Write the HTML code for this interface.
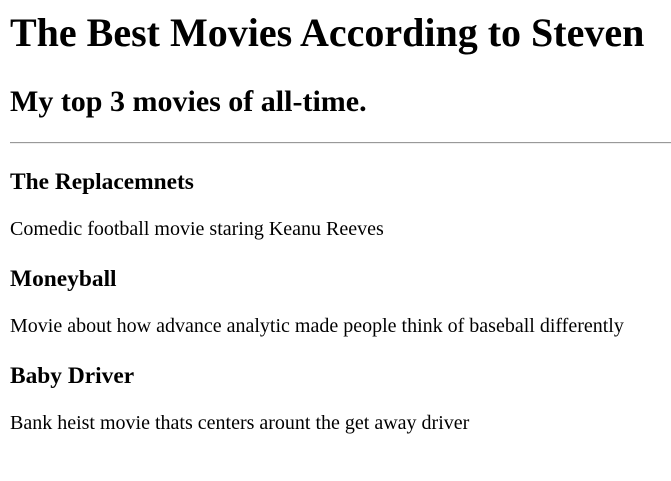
<!DOCTYPE html>
<html><head><style>
html,body{margin:0;padding:0;background:#fff;width:671px;height:481px;overflow:hidden;position:relative}
div{position:absolute;left:10px;font-family:"Liberation Serif",serif;line-height:1;white-space:nowrap;color:#000}
.h1{font-size:40px;font-weight:bold;top:13px}
.h2{font-size:30px;font-weight:bold;top:87px}
.h3{font-size:23.4px;font-weight:bold}
.p{font-size:20px}
.hr{left:10px;top:142px;width:661px;height:0;border-top:1px solid #999;border-bottom:1px solid #eee}
</style></head><body>
<div class="h1">The Best Movies According to Steven</div>
<div class="h2">My top 3 movies of all-time.</div>
<div class="hr"></div>
<div class="h3" style="top:171px">The Replacemnets</div>
<div class="p" style="top:219px">Comedic football movie staring Keanu Reeves</div>
<div class="h3" style="top:268px">Moneyball</div>
<div class="p" style="top:316px">Movie about how advance analytic made people think of baseball differently</div>
<div class="h3" style="top:365px">Baby Driver</div>
<div class="p" style="top:413px">Bank heist movie thats centers arount the get away driver</div>
</body></html>
